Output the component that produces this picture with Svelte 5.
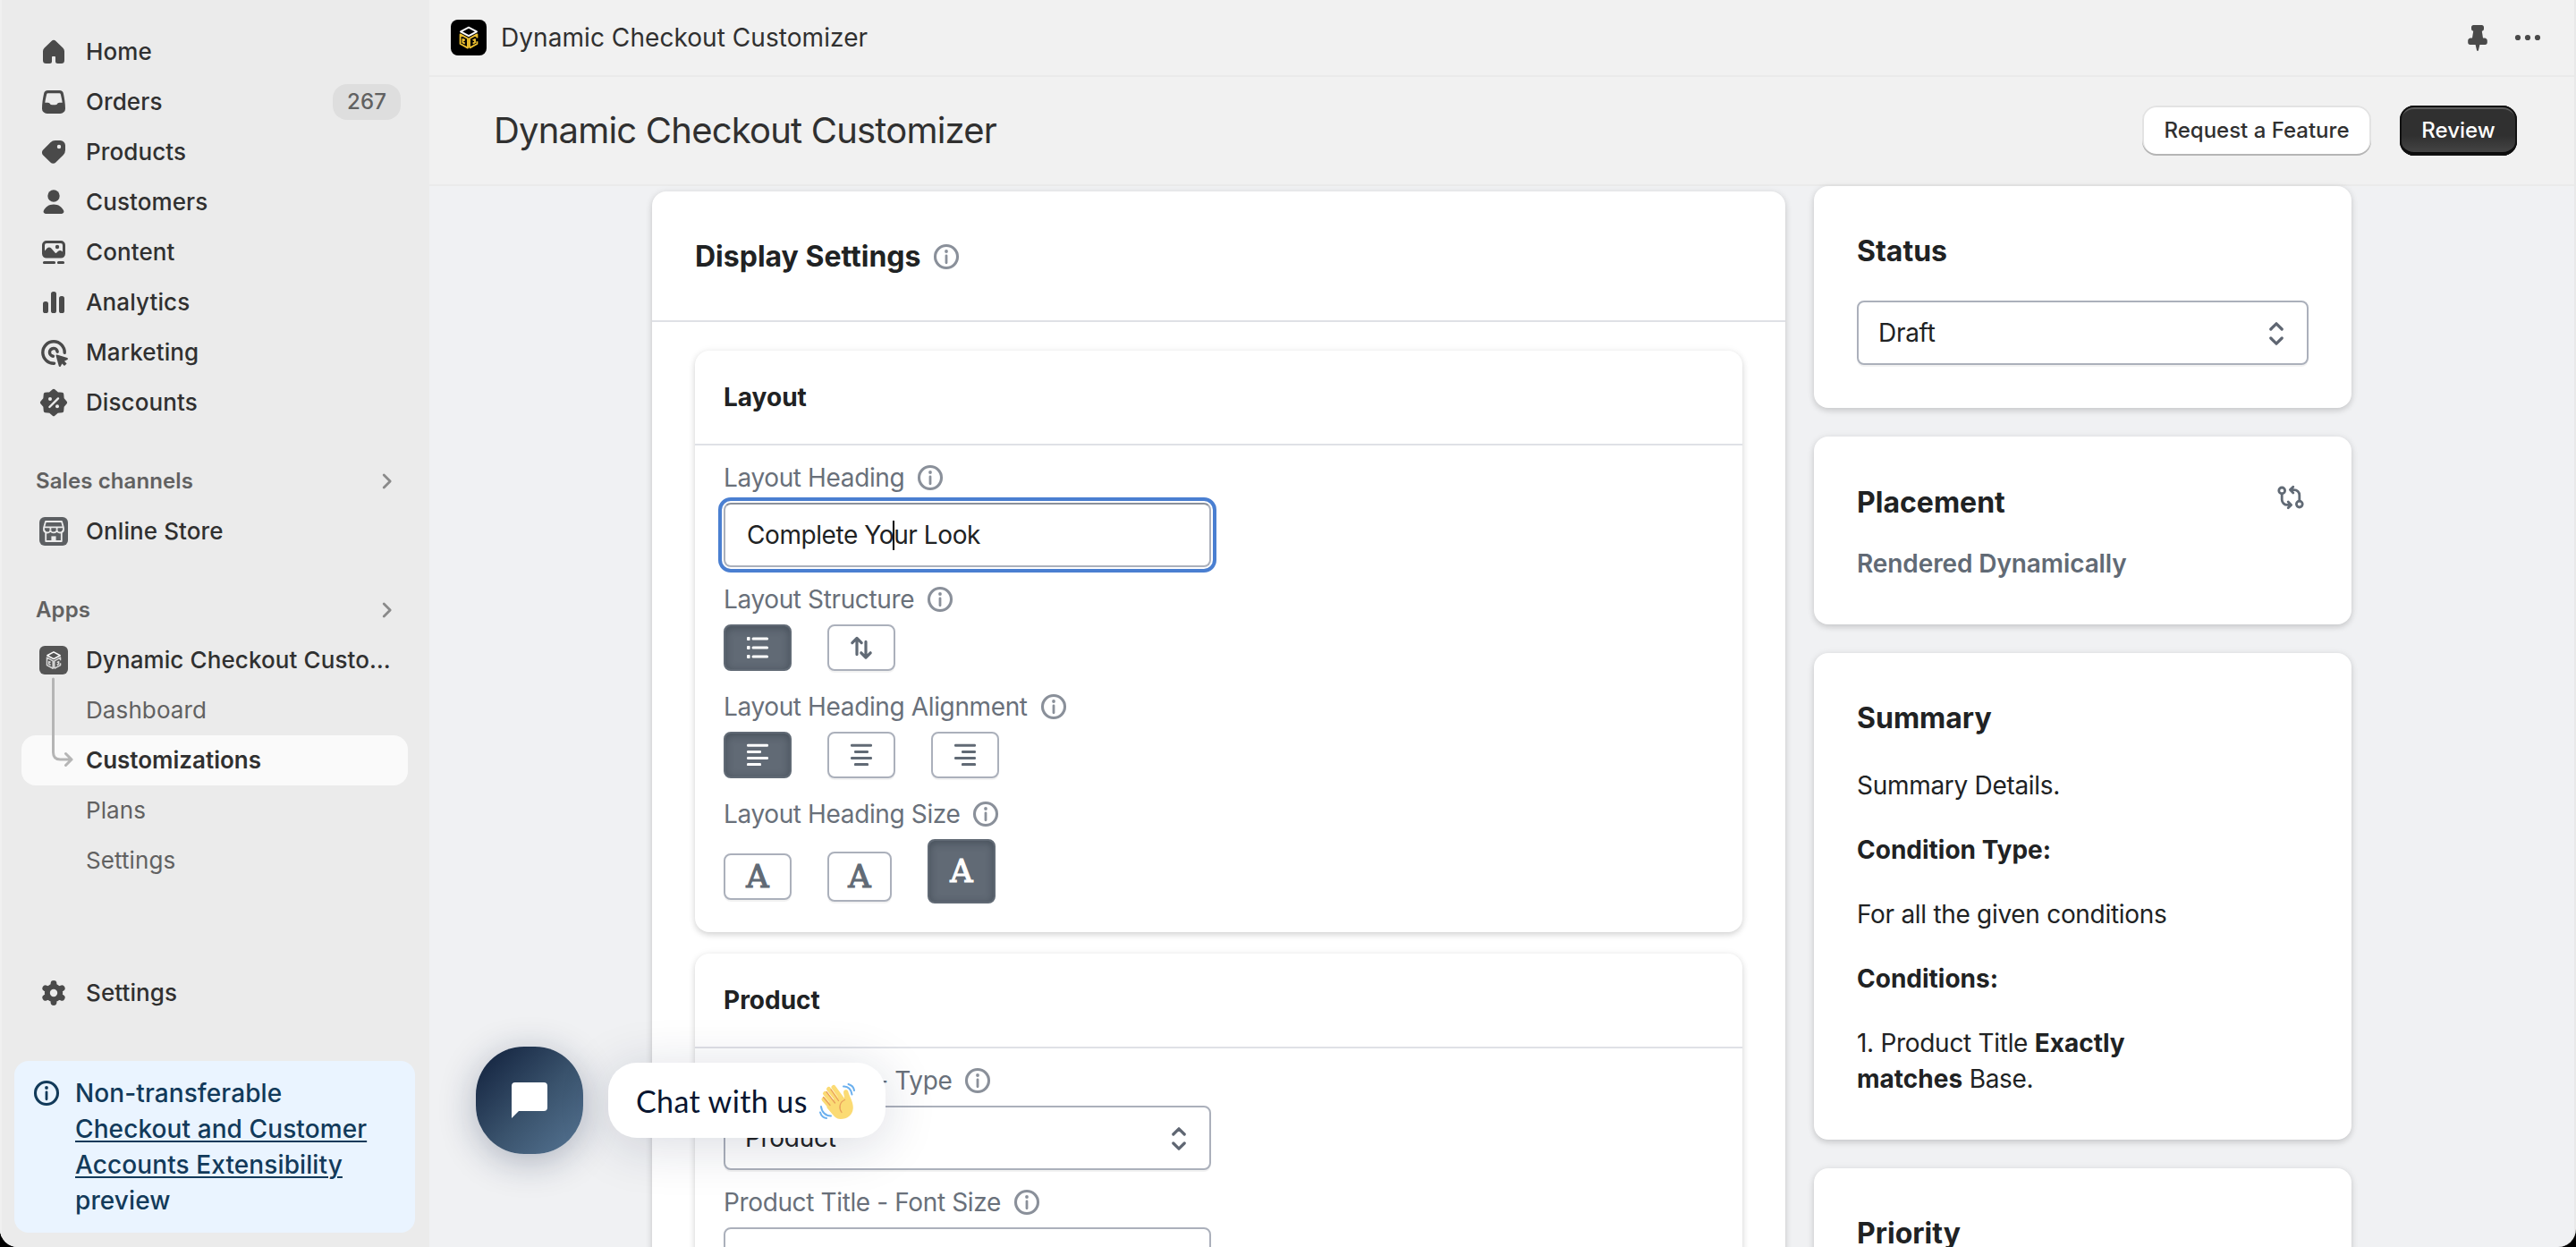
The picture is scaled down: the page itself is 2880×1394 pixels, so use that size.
<script lang="ts">
  type IconName = 'home' | 'orders' | 'products' | 'customers' | 'content' | 'analytics' | 'marketing' | 'discounts';

  const nav: { label: string; icon: IconName; count?: number }[] = [
    { label: 'Home', icon: 'home' },
    { label: 'Orders', icon: 'orders', count: 267 },
    { label: 'Products', icon: 'products' },
    { label: 'Customers', icon: 'customers' },
    { label: 'Content', icon: 'content' },
    { label: 'Analytics', icon: 'analytics' },
    { label: 'Marketing', icon: 'marketing' },
    { label: 'Discounts', icon: 'discounts' }
  ];
  const appPages = ['Dashboard', 'Customizations', 'Plans', 'Settings'];
  const alignments = ['left', 'center', 'right'];
  const sizes = ['small', 'medium', 'large'];

  // start x and length of each text line in the alignment icons
  const alignLines: { [key: string]: number[][] } = {
    left: [[4, 12], [4, 8], [4, 12], [4, 8]],
    center: [[4, 12], [6, 8], [4, 12], [6, 8]],
    right: [[4, 12], [8, 8], [4, 12], [8, 8]]
  };

  // eight rounded bumps around the middle of the 20x20 grid
  const badgePoints = Array.from({ length: 16 }, (_, i) => {
    const r = i % 2 ? 5.3 : 6.6;
    const a = (i * Math.PI) / 8;
    return `${(10 + r * Math.sin(a)).toFixed(2)},${(10 - r * Math.cos(a)).toFixed(2)}`;
  }).join(' ');

  let currentPage = $state('Customizations');
  let structure = $state('list');
  let alignment = $state('left');
  let size = $state('large');
</script>

{#snippet info()}
  <svg class="info" viewBox="0 0 20 20">
    <circle cx="10" cy="10" r="6.25" fill="none" stroke="currentColor" stroke-width="1.55" />
    <circle cx="10" cy="7" r=".95" fill="currentColor" />
    <path d="M10 9.4v4" stroke="currentColor" stroke-width="1.4" stroke-linecap="round" />
  </svg>
{/snippet}

{#snippet label(text: string)}
  <div class="label"><span>{text}</span>{@render info()}</div>
{/snippet}

{#snippet select(value: string)}
  <div class="select">
    <span>{value}</span>
    <svg viewBox="0 0 20 20"><path d="M6.9 8l3.1-3.1L13.1 8M6.9 13l3.1 3.1 3.1-3.1" /></svg>
  </div>
{/snippet}

{#snippet cube(top: string, side: string)}
  <g fill="none" stroke-width=".95" stroke-linejoin="round">
    <path stroke={top} d="M10 4.3l4.5 2.4-4.5 2.4-4.5-2.4z" />
    <path stroke={side} d="M9.5 15.800L5.300 13.500V8.200l4.200 2.300zM10.500 15.800v-5.300l4.200-2.300v2M10.500 15.800l4.200-2.300v-1.400" />
    <path stroke={side} d="M7.900 11.500l-1.200-.5v1.700l1.200.6M12.300 13.300l1.200-.6V11l-1.200.6" />
  </g>
{/snippet}

{#snippet navIcon(name: IconName)}
  <svg class="icon" viewBox="0 0 20 20">
    {#if name === 'home'}
      <path d="M8.75 4a1.8 1.8 0 0 1 2.5 0l3.9 3.7a2.7 2.7 0 0 1 .85 1.95v5.1a1.75 1.75 0 0 1-1.75 1.75h-2a1.25 1.25 0 0 1-1.25-1.25v-2.3a.45.45 0 0 0-.45-.45h-1.1a.45.45 0 0 0-.45.45v2.3a1.25 1.25 0 0 1-1.25 1.25h-2a1.75 1.75 0 0 1-1.75-1.75v-5.1a2.7 2.7 0 0 1 .85-1.95z" />
    {:else if name === 'orders'}
      <path fill-rule="evenodd" d="M6.7 3.5h6.6a2.2 2.2 0 0 1 2.15 1.8c.6 3 1.05 5.6 1.05 8.4a2.8 2.8 0 0 1-2.8 2.8h-7.4a2.8 2.8 0 0 1-2.8-2.8c0-2.8.45-5.4 1.05-8.4a2.2 2.2 0 0 1 2.15-1.8zm.1 1.6a.7.7 0 0 0-.7.55c-.45 2-.8 3.5-.95 4.75h1.6c.9 0 .95.4 1.35.9.25.3.5.3.8.3h2.2c.3 0 .55 0 .8-.3.4-.5.45-.9 1.35-.9h1.6c-.15-1.25-.5-2.75-.95-4.75a.7.7 0 0 0-.7-.55z" />
    {:else if name === 'products'}
      <path fill-rule="evenodd" d="M10.9 3.5h2.8a2.8 2.8 0 0 1 2.8 2.8v2.6a3.8 3.8 0 0 1-1.1 2.7l-4.2 4.2a2.1 2.1 0 0 1-3 0l-4.1-4.1a2.1 2.1 0 0 1 0-3l4.1-4.1a3.8 3.8 0 0 1 2.7-1.1zM13 8.1a1.1 1.1 0 1 0 0-2.2 1.1 1.1 0 0 0 0 2.2z" />
    {:else if name === 'customers'}
      <circle cx="10" cy="6.5" r="3.35" />
      <path d="M10 11.3c2.7 0 4.6 1.4 5.6 3.5.4.8-.2 1.7-1.1 1.7h-9c-.9 0-1.5-.9-1.1-1.7 1-2.1 2.9-3.5 5.6-3.5z" />
    {:else if name === 'content'}
      <path fill-rule="evenodd" d="M6 3.5h8a2.5 2.5 0 0 1 2.5 2.5v4.8a2.5 2.5 0 0 1-2.5 2.5h-8a2.5 2.5 0 0 1-2.5-2.5v-4.8a2.5 2.5 0 0 1 2.5-2.5zm0 1.5a1 1 0 0 0-1 1v3.3l1.3-1.5c.7-.8 1.7-.8 2.3 0l2.2 2.5c.2.3.5.3.7.1l.9-.9c.7-.7 1.6-.7 2.2-.1l.4.4v-3.8a1 1 0 0 0-1-1z" />
      <circle cx="12" cy="7" r="1.1" />
      <path d="M4.7 15.7h5.6M12.7 15.7h2.6" stroke="currentColor" stroke-width="1.5" stroke-linecap="round" />
    {:else if name === 'analytics'}
      <rect x="4" y="9.5" width="3" height="6.5" rx="1.3" />
      <rect x="8.5" y="4" width="3" height="12" rx="1.3" />
      <rect x="13" y="6.5" width="3" height="9.5" rx="1.3" />
    {:else if name === 'marketing'}
      <g fill="none" stroke="currentColor" stroke-width="1.7" stroke-linecap="round">
        <path d="M16.1 10.2A6.1 6.1 0 1 0 10.300 16.100" />
        <path d="M12.1 9.600A2.200 2.200 0 1 0 9.700 12.100" />
      </g>
      <path d="M11.3 11.9c-.1-.4.2-.7.6-.6l5.7 1.7c.5.2.5.8.1 1l-1.7.9 1.3 1.3-1.3 1.3-1.3-1.3-.8 1.5c-.2.4-.9.3-1-.1z" />
    {:else}
      <polygon points={badgePoints} stroke="currentColor" stroke-width="1.9" stroke-linejoin="round" />
      <path d="M7.7 12.5l4.8-4.8" stroke="#ebebeb" stroke-width="1.2" stroke-linecap="round" />
      <circle cx="8" cy="8" r="1" fill="#ebebeb" />
      <circle cx="12" cy="12.1" r="1" fill="#ebebeb" />
    {/if}
  </svg>
{/snippet}

<div class="window">
  <nav class="sidebar">
    {#each nav as item}
      <a class="row" href="#{item.icon}">
        {@render navIcon(item.icon)}
        <span>{item.label}</span>
        {#if item.count}<span class="count">{item.count}</span>{/if}
      </a>
    {/each}

    <div class="section">
      <span>Sales channels</span>
      <svg viewBox="0 0 20 20"><path d="M8.100 6.500L11.600 10l-3.500 3.500" /></svg>
    </div>
    <a class="row" href="#store">
      <svg class="icon" viewBox="0 0 20 20">
        <rect x="2" y="2" width="16" height="16" rx="3" fill="#5c5f62" />
        <path d="M5.500 4.500h9l1 3.500v1a1.600 1.600 0 0 1-1.100 1.500v5H5.600v-5A1.600 1.600 0 0 1 4.500 9V8zM4.700 7.700h10.600M8.200 8v1.200M11.800 8v1.200" fill="none" stroke="#ebebeb" stroke-width=".9" stroke-linejoin="round" />
        <path d="M4.700 9.200a1.700 1.500 0 0 0 3.500 0 1.800 1.500 0 0 0 3.600 0 1.700 1.500 0 0 0 3.500 0" fill="none" stroke="#ebebeb" stroke-width=".9" />
        <path d="M8.700 15.500v-2.800h2.600v2.800z" fill="#ebebeb" />
      </svg>
      <span>Online Store</span>
    </a>

    <div class="section">
      <span>Apps</span>
      <svg viewBox="0 0 20 20"><path d="M8.100 6.500L11.600 10l-3.500 3.500" /></svg>
    </div>
    <div class="app">
      <a class="row" href="#app">
        <svg class="icon" viewBox="0 0 20 20">
          <rect x="2" y="2" width="16" height="16" rx="3" fill="#555" />
          <g transform="translate(2 2) scale(.8)">{@render cube('#fff', '#d8d8d8')}</g>
        </svg>
        <span class="clip">Dynamic Checkout Customizer</span>
      </a>
      {#each appPages as page}
        <a class="row sub" class:current={currentPage === page} href="#{page}" onclick={() => (currentPage = page)}>{page}</a>
      {/each}
      <svg class="branch" viewBox="0 0 30 110">
        <path d="M6.500 3v82q0 8 8 8h12.500M20.500 86.500l6.500 6.500-6.500 6.500" />
      </svg>
    </div>

    <a class="row settings" href="#settings">
      <svg class="icon" viewBox="0 0 20 20">
        <circle cx="10" cy="10" r="5.1" />
        <g stroke="currentColor" stroke-width="3.4" stroke-linecap="round">
          <path d="M10 4.7v10.6" />
          <path d="M10 4.7v10.6" transform="rotate(60 10 10)" />
          <path d="M10 4.7v10.6" transform="rotate(120 10 10)" />
        </g>
        <circle cx="10" cy="10" r="2.1" fill="#ebebeb" />
      </svg>
      <span>Settings</span>
    </a>

    <div class="banner">
      {@render info()}
      <p>Non-transferable <a href="#preview">Checkout and Customer Accounts Extensibility</a> preview</p>
    </div>
  </nav>

  <main>
    <header class="topbar">
      <svg class="logo" viewBox="0 0 20 20">
        <rect width="20" height="20" rx="4" />
        {@render cube('#fff', '#edc02f')}
      </svg>
      <span>Dynamic Checkout Customizer</span>
      <svg class="icon pin" viewBox="0 0 20 20">
        <path d="M7.700 3h4.600c.7 0 1.200.5 1.200 1.200v.9c0 .7-.5 1.200-1.100 1.300l.6 3.900h.9c.9 0 1.500.7 1.500 1.500v1c0 .7-.5 1.200-1.200 1.200h-3l-.7 3c-.1.700-.9.700-1 0l-.7-3h-3c-.7 0-1.200-.5-1.200-1.200v-1c0-.8.6-1.500 1.500-1.500H7l.6-3.900a1.300 1.300 0 0 1-1.100-1.300v-.9C6.500 3.500 7 3 7.700 3z" />
      </svg>
      <svg class="icon" viewBox="0 0 20 20">
        <circle cx="4.5" cy="10" r="1.55" /><circle cx="10" cy="10" r="1.55" /><circle cx="15.5" cy="10" r="1.55" />
      </svg>
    </header>

    <header class="title">
      <h1>Dynamic Checkout Customizer</h1>
      <button class="feature" type="button">Request a Feature</button>
      <button class="review" type="button">Review</button>
    </header>

    <div class="content">
      <section class="card display">
        <h2>Display Settings {@render info()}</h2>
        <div class="panels">
          <div class="card panel">
            <h3>Layout</h3>
            <div class="fields">
              {@render label('Layout Heading')}
              <div class="input">Complete Yo<i class="caret"></i>ur Look</div>
              {@render label('Layout Structure')}
              <div class="group">
                <button type="button" aria-label="List" class="toggle" class:pressed={structure === 'list'} onclick={() => (structure = 'list')}>
                  <svg class="icon" viewBox="0 0 20 20">
                    <path d="M7.5 5h7.8M7.5 10h7.8M7.5 15h7.8" stroke="currentColor" stroke-width="1.5" stroke-linecap="round" />
                    <rect x="4" y="4" width="1.8" height="2" rx=".5" /><rect x="4" y="9" width="1.8" height="2" rx=".5" /><rect x="4" y="14" width="1.8" height="2" rx=".5" />
                  </svg>
                </button>
                <button type="button" aria-label="Sort" class="toggle" class:pressed={structure === 'sort'} onclick={() => (structure = 'sort')}>
                  <svg class="icon line" viewBox="0 0 20 20"><path d="M4.900 7.300l2.600-2.600 2.600 2.600M7.500 5v8.800M9.900 12.900l2.600 2.600 2.600-2.600M12.500 15V6.700" /></svg>
                </button>
              </div>
              {@render label('Layout Heading Alignment')}
              <div class="group">
                {#each alignments as a}
                  <button type="button" aria-label={a} class="toggle" class:pressed={alignment === a} onclick={() => (alignment = a)}>
                    <svg class="icon" viewBox="0 0 20 20">
                      {#each alignLines[a] as [x, w], i}
                        <rect {x} y={3.9 + i * 3.55} width={w} height="1.5" rx=".6" />
                      {/each}
                    </svg>
                  </button>
                {/each}
              </div>
              {@render label('Layout Heading Size')}
              <div class="group sizes">
                {#each sizes as s}
                  <button type="button" aria-label={s} class="toggle {s}" class:pressed={size === s} onclick={() => (size = s)}>A</button>
                {/each}
              </div>
            </div>
          </div>

          <div class="card panel">
            <h3>Product</h3>
            <div class="fields">
              {@render label('Product Title - Type')}
              {@render select('Product')}
              {@render label('Product Title - Font Size')}
              {@render select('Medium')}
            </div>
          </div>
        </div>
      </section>

      <aside>
        <section class="card side">
          <h2>Status</h2>
          {@render select('Draft')}
        </section>
        <section class="card side placement">
          <h2>
            Placement
            <svg class="icon" viewBox="0 0 20 20">
              <g fill="none" stroke="currentColor" stroke-width="1.4" stroke-linecap="round" stroke-linejoin="round">
                <circle cx="5.1" cy="6.2" r="1.7" /><circle cx="14.9" cy="13.8" r="1.7" />
                <path d="M5.1 8v3.2a3 3 0 0 0 3 3h1.500M8.600 12.500l1.700 1.700-1.700 1.700M14.900 12V8.800a3 3 0 0 0-3-3h-1.500M11.400 4.100L9.700 5.800l1.700 1.700" />
              </g>
            </svg>
          </h2>
          <p>Rendered Dynamically</p>
        </section>
        <section class="card side">
          <h2>Summary</h2>
          <p>Summary Details.</p>
          <p><b>Condition Type:</b></p>
          <p>For all the given conditions</p>
          <p><b>Conditions:</b></p>
          <p class="condition">1. Product Title <b>Exactly matches</b> Base.</p>
        </section>
        <section class="card side">
          <h2>Priority</h2>
          {@render select('0')}
        </section>
      </aside>
    </div>
  </main>

  <div class="chat">
    <button class="bubble" type="button" aria-label="Open chat">
      <svg viewBox="0 0 40 40"><path d="M4 0h32a4 4 0 0 1 4 4v24a4 4 0 0 1-4 4H8l-8 8V4a4 4 0 0 1 4-4z" /></svg>
    </button>
    <div class="greeting">
      <span>Chat with us</span>
      <svg viewBox="0 0 40 40">
        <g stroke="#fbdb74" stroke-linecap="round" fill="none" stroke-width="5">
          <path d="M5 18l11 13M6.500 11.500L20 28M10.500 6.500L24 24M16 4.500L28 21" />
        </g>
        <path fill="#fbdb74" d="M12 20l13-6 3 3.500c.5-3-1.500-6-.8-8.500.8-2.500 4.300-2.500 5 0 1.800 6.500 5.800 12 5.600 18.500-.2 8-6.800 12.500-14 12.500-5 0-7-3-10.500-7l-5-6z" />
        <path fill="none" stroke="#e8a05c" stroke-width="1.3" stroke-linecap="round" d="M4.500 15.500l7.500 9M8 9.500l9.500 12.500M13 7l8.500 12.500M28.500 18.500c-6 2.500-7 9-3.500 14" />
        <path fill="none" stroke="#6bb0ee" stroke-width="2" stroke-linecap="round" d="M27 3.500c5-.5 9 3.500 9.500 9M32.500 1c3.500 1 6 3.500 6.500 7M2 26c.5 6 5 10.500 11 10.500M1 32.500c1 3.500 3.500 6 7 6.500" />
      </svg>
    </div>
  </div>
</div>

<style>
  :global(body) {
    margin: 0;
    background: #000;
  }
  .window {
    position: relative;
    box-sizing: border-box;
    display: flex;
    width: 2880px;
    height: 1394px;
    overflow: hidden;
    border-radius: 0 0 20px 20px;
    border-right: 2px solid #e9e9e9;
    background: #f0f1f3;
    color: #303030;
    font-family: Inter, 'Liberation Sans', sans-serif;
    font-size: 28px;
    line-height: 40px;
  }
  .window *, .window *::before {
    box-sizing: border-box;
  }
  a {
    color: inherit;
    text-decoration: none;
  }
  h1, h2, h3, p {
    margin: 0;
  }
  button {
    padding: 0;
    border: 0;
    font: inherit;
    cursor: pointer;
  }
  .icon {
    flex: none;
    width: 40px;
    height: 40px;
    fill: currentColor;
  }

  .sidebar {
    display: flex;
    flex: none;
    flex-direction: column;
    width: 480px;
    padding: 30px 16px 16px;
    background: #ebebeb;
    box-shadow: inset 2px 0 #f0f0f0;
    font-size: 26px;
    font-weight: 500;
    letter-spacing: .1px;
  }
  .row {
    display: flex;
    flex: none;
    align-items: center;
    gap: 16px;
    height: 56px;
    margin: 0 8px;
    padding: 0 8px 0 16px;
    border-radius: 16px;
  }
  .row .icon {
    color: #4a4a4a;
  }
  .count {
    margin-left: auto;
    padding: 0 16px;
    border-radius: 16px;
    background: #dedede;
    color: #616161;
    font-size: 24px;
  }
  .section {
    display: flex;
    flex: none;
    align-items: center;
    justify-content: space-between;
    height: 56px;
    margin-top: 32px;
    padding: 0 11px 0 24px;
    color: #616161;
    font-size: 24px;
    font-weight: 600;
  }
  .section svg {
    width: 40px;
    height: 40px;
    fill: none;
    stroke: #8a8a8a;
    stroke-width: 1.4;
    stroke-linecap: round;
    stroke-linejoin: round;
  }
  .app {
    position: relative;
  }
  .clip {
    overflow: hidden;
    width: 346px;
    text-overflow: ellipsis;
    white-space: nowrap;
  }
  .sub {
    padding-left: 72px;
    color: #616161;
    font-weight: 400;
  }
  .sub.current {
    background: #fafafa;
    color: #303030;
    font-weight: 600;
    letter-spacing: 0;
  }
  .branch {
    position: absolute;
    top: 46px;
    left: 37px;
    width: 30px;
    height: 110px;
    fill: none;
    stroke: #b5b5b5;
    stroke-width: 3;
    stroke-linecap: round;
    stroke-linejoin: round;
  }
  .settings {
    margin-top: auto;
    margin-bottom: 48px;
  }
  .banner {
    display: flex;
    flex: none;
    gap: 12px;
    height: 192px;
    padding: 16px 24px 16px 16px;
    border-radius: 16px;
    background: #eaf4ff;
    color: #123a5a;
    font-size: 28px;
  }
  .banner a {
    text-decoration: underline;
    text-decoration-thickness: 2px;
    text-underline-offset: 3px;
  }
  .banner .info {
    color: inherit;
  }

  main {
    display: flex;
    flex: 1;
    flex-direction: column;
    min-width: 0;
  }
  header {
    display: flex;
    flex: none;
    align-items: center;
    background: #f1f1f1;
    border-bottom: 2px solid #eaeaea;
  }
  .topbar {
    height: 86px;
    padding: 0 32px 0 24px;
    letter-spacing: .06px;
  }
  .logo {
    width: 40px;
    height: 40px;
    margin-right: 16px;
  }
  .pin {
    margin-left: auto;
    margin-right: 16px;
  }
  .topbar .icon {
    color: #4a4a4a;
  }
  .title {
    height: 122px;
    padding: 0 64px 0 72px;
  }
  h1 {
    margin-right: auto;
    font-size: 40px;
    font-weight: 400;
    letter-spacing: -.8px;
  }
  .feature, .review {
    height: 56px;
    border-radius: 16px;
    font-size: 24px;
    font-weight: 500;
  }
  .feature {
    width: 256px;
    margin-right: 32px;
    background: #fff;
    color: #303030;
    box-shadow: inset 0 -2px #b5b5b5, inset 0 0 0 2px #e3e3e3;
  }
  .review {
    width: 131px;
    background: linear-gradient(#303030 60%, #484848);
    color: #fff;
    box-shadow: inset 0 0 0 2px #111, inset 0 -4px #0c0c0c, inset 0 4px #5c5c5c;
  }

  .content {
    display: flex;
    align-items: flex-start;
    gap: 32px;
    width: 1900px;
    margin: 0 auto;
    color: #202223;
    letter-spacing: -.3px;
  }
  .card {
    border-radius: 16px;
    background: #fff;
    box-shadow: 0 0 10px rgba(23, 24, 24, .05), 0 3px 7px rgba(0, 0, 0, .15);
  }
  h2 {
    display: flex;
    align-items: center;
    padding-top: 2px;
    font-size: 32px;
    font-weight: 650;
    line-height: 46px;
    letter-spacing: 0;
  }
  .display {
    flex: 1;
    height: 1400px;
    margin-top: 6px;
  }
  .display h2 {
    gap: 9px;
    height: 146px;
    padding: 2px 48px 0;
    border-bottom: 2px solid #dfe1e6;
  }
  .info {
    flex: none;
    width: 40px;
    height: 40px;
    color: #8a909a;
  }
  .panels {
    display: flex;
    flex-direction: column;
    gap: 24px;
    padding: 32px 48px;
  }
  h3 {
    height: 106px;
    padding: 32px;
    border-bottom: 2px solid #dfe1e6;
    font-size: 28px;
    font-weight: 650;
    letter-spacing: 0;
  }
  .fields {
    display: flex;
    flex-direction: column;
    gap: 8px;
    width: 609px;
    padding: 16px 32px 32px;
  }
  .label {
    display: flex;
    align-items: center;
    gap: 9px;
    height: 40px;
    color: #69707a;
    letter-spacing: -.37px;
    white-space: nowrap;
  }
  .input + .label, .select + .label {
    margin-top: 8px;
  }
  .group + .label {
    margin-top: 12px;
  }
  .input, .select {
    display: flex;
    align-items: center;
    height: 72px;
    border: 2px solid #abb0bb;
    border-radius: 8px;
    background: #fff;
    white-space: pre;
  }
  .input {
    padding: 0 24px;
    border-top-color: #8a909a;
    outline: 4px solid #4a7fd1;
    outline-offset: 2px;
    letter-spacing: -.42px;
  }
  .caret {
    width: 2px;
    height: 33px;
    margin: 0 -1px;
    background: #000;
  }
  .select {
    justify-content: space-between;
    padding: 0 14px 0 22px;
    box-shadow: 0 2px rgba(0, 0, 0, .05);
  }
  .select svg {
    width: 40px;
    height: 40px;
    fill: none;
    stroke: #5f6672;
    stroke-width: 1.6;
    stroke-linecap: round;
    stroke-linejoin: round;
  }
  .group {
    display: flex;
    align-items: center;
    gap: 40px;
  }
  .toggle {
    display: flex;
    align-items: center;
    justify-content: center;
    width: 76px;
    height: 52px;
    border: 2px solid #abb0bb;
    border-radius: 8px;
    background: #fff;
    box-shadow: 0 2px rgba(0, 0, 0, .05);
    color: #616a75;
  }
  .toggle.pressed {
    border-color: #616a75;
    background: #616a75;
    box-shadow: inset 0 2px 10px rgba(30, 40, 50, .4);
    color: #fff;
  }
  .line {
    fill: none;
    stroke: currentColor;
    stroke-width: 1.6;
    stroke-linecap: round;
    stroke-linejoin: round;
  }
  .sizes {
    align-items: flex-end;
    height: 72px;
  }
  .sizes .toggle {
    font-family: 'DejaVu Serif', serif;
    font-size: 35px;
    -webkit-text-stroke: 1.2px currentColor;
  }
  .sizes .small {
    margin-bottom: 4px;
  }
  .sizes .medium {
    width: 72px;
    height: 56px;
    margin-bottom: 2px;
  }
  .sizes .large {
    height: 72px;
  }

  aside {
    display: flex;
    flex: none;
    flex-direction: column;
    gap: 32px;
    width: 601px;
  }
  .side {
    display: flex;
    flex-direction: column;
    gap: 32px;
    padding: 48px;
  }
  .placement {
    gap: 24px;
    color: #616a75;
    font-weight: 600;
    letter-spacing: -.1px;
  }
  .placement h2 {
    justify-content: space-between;
    height: 50px;
    color: #202223;
  }
  .placement .icon {
    margin-bottom: 12px;
    color: #616a75;
  }
  .condition {
    width: 370px;
  }
  b {
    font-weight: 650;
    letter-spacing: 0;
  }

  /* floats over the page in the bottom left corner */
  .chat {
    position: absolute;
    bottom: 104px;
    left: 532px;
    display: flex;
    align-items: center;
    gap: 28px;
  }
  .bubble {
    display: flex;
    align-items: center;
    justify-content: center;
    width: 120px;
    height: 120px;
    border-radius: 54px;
    background: linear-gradient(135deg, #13233f 5%, #3a536d 55%, #567594);
    box-shadow: 0 8px 40px rgba(16, 32, 70, .3);
  }
  .bubble svg {
    width: 40px;
    height: 40px;
    fill: #fff;
  }
  .greeting {
    display: flex;
    align-items: center;
    justify-content: space-between;
    width: 310px;
    height: 84px;
    padding: 2px 34px 0 31px;
    border-radius: 32px;
    background: #fff;
    box-shadow: 0 8px 60px rgba(16, 32, 70, .16);
    color: #081530;
    font-family: Lato, sans-serif;
    font-size: 34px;
    letter-spacing: .4px;
    white-space: nowrap;
  }
  .greeting svg {
    width: 40px;
    height: 40px;
  }
</style>
